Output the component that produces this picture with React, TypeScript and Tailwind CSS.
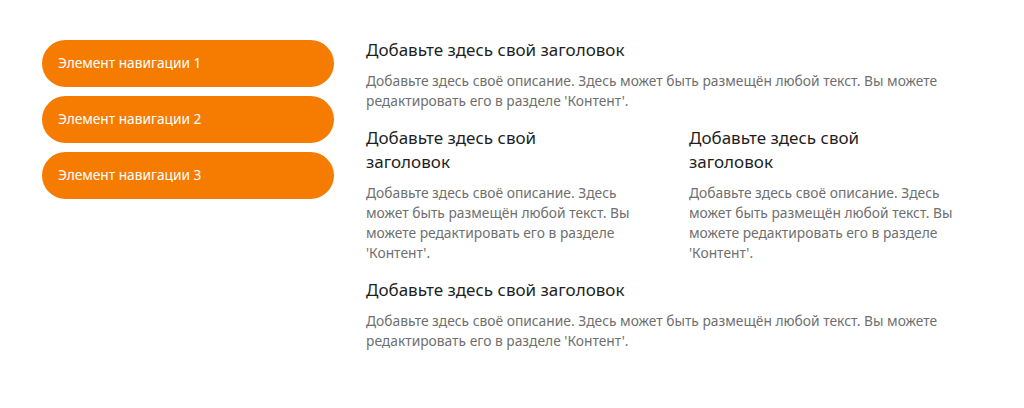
import React from 'react';

const navItems = ['Элемент навигации 1', 'Элемент навигации 2', 'Элемент навигации 3'];

const title = 'Добавьте здесь свой заголовок';
const text =
  "Добавьте здесь своё описание. Здесь может быть размещён любой текст. Вы можете редактировать его в разделе 'Контент'.";

function Block({ narrow = false }: { narrow?: boolean }) {
  return (
    <div>
      <h2 className={`text-[17px] leading-[24px] text-[#1f1f1f] ${narrow ? 'pr-[16px]' : ''}`}>{title}</h2>
      <p className="mt-[9px] text-[13.8px] leading-[20px] text-[#6f6f6f]">{text}</p>
    </div>
  );
}

export default function App() {
  return (
    <div
      className="flex h-[408px] w-[1024px] items-start gap-[32px] bg-white pl-[42px]"
      style={{ fontFamily: '"Noto Sans", "Open Sans", sans-serif' }}
    >
      <nav className="mt-[40px] flex w-[292px] shrink-0 flex-col gap-[9px]">
        {navItems.map((item) => (
          <a
            key={item}
            href="#"
            className="flex h-[47px] items-center rounded-full bg-[#f57c00] px-[16px] text-[13.7px] text-white"
          >
            {item}
          </a>
        ))}
      </nav>
      <main className="mt-[38px] flex w-[580px] flex-col gap-[15px]">
        <Block />
        <div className="grid grid-cols-[266px_266px] gap-[57px]">
          <Block narrow />
          <Block narrow />
        </div>
        <Block />
      </main>
    </div>
  );
}
